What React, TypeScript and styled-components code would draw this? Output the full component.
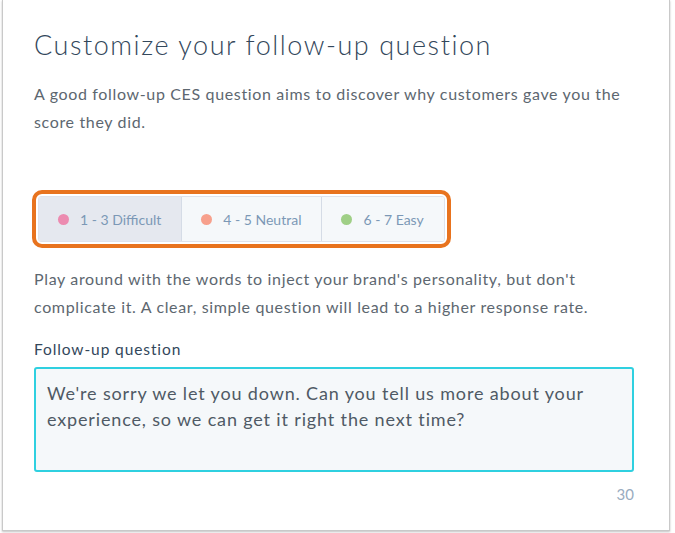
import styled, { createGlobalStyle } from "styled-components";

const GlobalStyle = createGlobalStyle`
  html, body {
    margin: 0;
    padding: 0;
    background: #ffffff;
  }
  body {
    font-family: "Lato", "Open Sans", sans-serif;
    -webkit-font-smoothing: antialiased;
  }
`;

const scores = [
  { label: "1 - 3 Difficult", dot: "#ec8bb0", active: true },
  { label: "4 - 5 Neutral", dot: "#f7a08c", active: false },
  { label: "6 - 7 Easy", dot: "#9fcf86", active: false },
];

export default function App() {
  return (
    <>
      <GlobalStyle />
      <Frame>
        <Panel>
          <Title>Customize your follow-up question</Title>
          <Desc>
            A good follow-up CES question aims to discover why customers gave you the
            score they did.
          </Desc>

          <Highlight>
            <Segments>
              {scores.map((s) => (
                <Segment key={s.label} $active={s.active}>
                  <Dot $color={s.dot} />
                  {s.label}
                </Segment>
              ))}
            </Segments>
          </Highlight>

          <Desc $gap={17}>
            Play around with the words to inject your brand's personality, but don't
            complicate it. A clear, simple question will lead to a higher response rate.
          </Desc>

          <Label>Follow-up question</Label>
          <Field
            readOnly
            defaultValue="We're sorry we let you down. Can you tell us more about your experience, so we can get it right the next time?"
          />
          <Counter>30</Counter>
        </Panel>
      </Frame>
    </>
  );
}

const Frame = styled.div`
  width: 675px;
  height: 533px;
  box-sizing: border-box;
  padding: 0 5px 2px 2px;
  overflow: hidden;
`;

const Panel = styled.div`
  height: 100%;
  box-sizing: border-box;
  border: 1px solid #c9c9c9;
  border-top: none;
  box-shadow: 0 1px 2px rgba(0, 0, 0, 0.25);
  padding: 26px 32px 0 31px;
  display: flex;
  flex-direction: column;
  align-items: flex-start;
`;

const Title = styled.h1`
  margin: 0;
  font-size: 27px;
  font-weight: 300;
  color: #33475b;
  line-height: 38px;
  letter-spacing: 1.55px;
`;

const Desc = styled.p<{ $gap?: number }>`
  margin: ${(p) => p.$gap ?? 16}px 0 0;
  width: 605px;
  font-size: 16px;
  line-height: 28px;
  color: #5d6770;
  font-weight: 400;
  letter-spacing: 0.65px;
`;

const Highlight = styled.div`
  margin-top: 54px;
  margin-left: -2px;
  padding: 2px;
  border: 4px solid #e8731e;
  border-radius: 10px;
`;

const Segments = styled.div`
  display: flex;
  border: 1px solid #dfe3eb;
  border-radius: 3px;
  overflow: hidden;
`;

const Segment = styled.div<{ $active: boolean }>`
  display: flex;
  align-items: center;
  gap: 11px;
  height: 44px;
  padding: 0 20px 0 19px;
  font-size: 14px;
  color: #7c98b6;
  background: ${(p) => (p.$active ? "#e5e8ef" : "#f5f8fa")};
  & + & {
    border-left: 1px solid #d5dce6;
  }
`;

const Dot = styled.span<{ $color: string }>`
  width: 11px;
  height: 11px;
  border-radius: 50%;
  background: ${(p) => p.$color};
`;

const Label = styled.div`
  margin-top: 19px;
  font-size: 15.5px;
  font-weight: 400;
  color: #33475b;
  letter-spacing: 0.9px;
`;

const Field = styled.textarea`
  margin-top: 9px;
  width: 600px;
  height: 105px;
  box-sizing: border-box;
  resize: none;
  border: 2px solid #2fd0e0;
  border-radius: 3px;
  background: #f5f8fa;
  padding: 11px 11px 10px;
  font-family: "Lato", "Open Sans", sans-serif;
  font-size: 18px;
  line-height: 26px;
  letter-spacing: 0.85px;
  color: #4f5a65;
  outline: none;
`;

const Counter = styled.div`
  margin-top: 13px;
  width: 600px;
  text-align: right;
  font-size: 15px;
  color: #99acc0;
`;
